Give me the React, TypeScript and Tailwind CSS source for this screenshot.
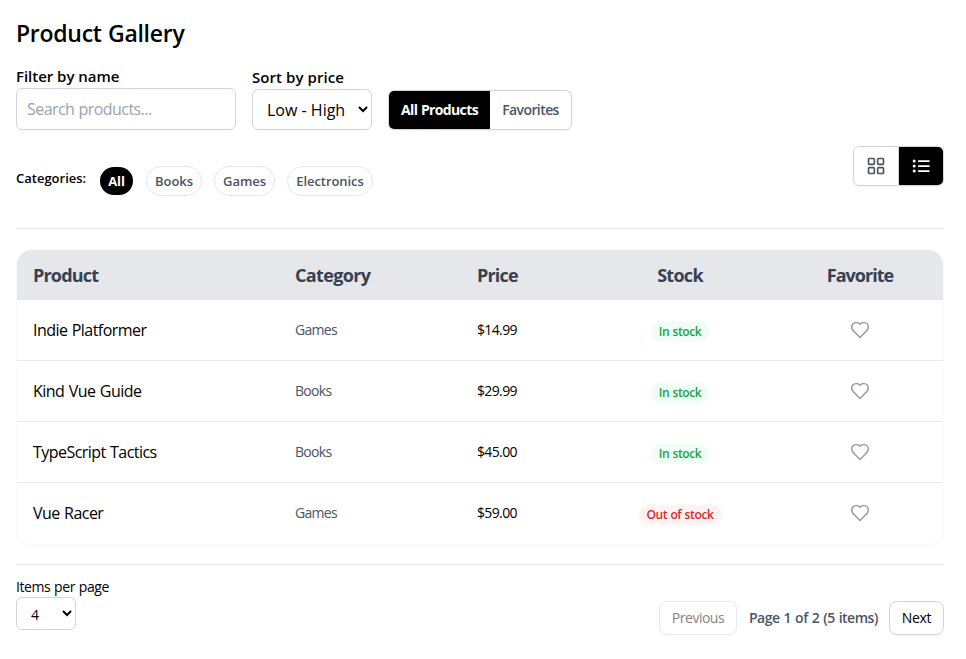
import React, { useState } from "react";

type Product = { name: string; category: string; price: string; inStock: boolean };

const products: Product[] = [
  { name: "Indie Platformer", category: "Games", price: "$14.99", inStock: true },
  { name: "Kind Vue Guide", category: "Books", price: "$29.99", inStock: true },
  { name: "TypeScript Tactics", category: "Books", price: "$45.00", inStock: true },
  { name: "Vue Racer", category: "Games", price: "$59.00", inStock: false },
];

const categories = [
  { name: "All", box: "w-[33px] h-7" },
  { name: "Books", box: "w-14 h-[30px]" },
  { name: "Games", box: "w-[61px] h-[30px]" },
  { name: "Electronics", box: "w-[86px] h-[30px]" },
];

function HeartIcon() {
  return (
    <svg className="h-5 w-5 text-[#9ca3af]" viewBox="0 0 24 24" fill="none" stroke="currentColor" strokeWidth="2" strokeLinecap="round" strokeLinejoin="round">
      <path d="M19 14c1.49-1.46 3-3.21 3-5.5A5.5 5.5 0 0 0 16.5 3c-1.76 0-3 .5-4.5 2-1.5-1.5-2.74-2-4.5-2A5.5 5.5 0 0 0 2 8.5c0 2.3 1.5 4.05 3 5.5l7 7Z" />
    </svg>
  );
}

function GridIcon() {
  return (
    <svg className="h-5 w-5" viewBox="0 0 24 24" fill="none" stroke="currentColor" strokeWidth="2">
      <rect x="3" y="3" width="7" height="7" rx="1" />
      <rect x="14" y="3" width="7" height="7" rx="1" />
      <rect x="3" y="14" width="7" height="7" rx="1" />
      <rect x="14" y="14" width="7" height="7" rx="1" />
    </svg>
  );
}

function ListIcon() {
  return (
    <svg className="h-5 w-5" viewBox="0 0 20 20" fill="currentColor">
      <circle cx="3.2" cy="5" r="1.5" />
      <circle cx="3.2" cy="10" r="1.5" />
      <circle cx="3.2" cy="15" r="1.5" />
      <rect x="6.8" y="4.2" width="12" height="1.7" rx="0.8" />
      <rect x="6.8" y="9.2" width="12" height="1.7" rx="0.8" />
      <rect x="6.8" y="14.2" width="12" height="1.7" rx="0.8" />
    </svg>
  );
}

export default function App() {
  const [category, setCategory] = useState("All");

  return (
    <main className="h-[659px] w-[966px] bg-white pt-[17px] pl-4 font-['Open_Sans','Noto_Sans',sans-serif] text-black">
      <div className="w-[928px] whitespace-nowrap">
        <h1 className="h-[33px] text-[23px] leading-8 font-semibold tracking-[-0.012em] [word-spacing:0.03em]">Product Gallery</h1>

        <div className="mt-4 flex h-16 items-end gap-4">
          <label className="flex flex-col">
            <span className="h-[22px] text-[15px] leading-5 font-semibold tracking-[-0.002em]">Filter by name</span>
            <input
              placeholder="Search products..."
              className="h-[42px] w-[220px] rounded-md border border-[#d1d5db] px-2.5 text-base tracking-[-0.035em] [word-spacing:0.04em] placeholder:text-[#9ca3af]"
            />
          </label>
          <label className="flex flex-col">
            <span className="h-[22px] text-[15px] leading-5 font-semibold tracking-[0.005em]">Sort by price</span>
            <select className="h-[41px] w-[120px] rounded-md border border-[#d1d5db] bg-white px-2.5 text-base">
              <option>Low - High</option>
              <option>High - Low</option>
            </select>
          </label>
          <div className="flex h-10 w-[184px] overflow-hidden rounded-md border border-[#d1d5db] text-sm shadow-xs">
            <button className="w-[101px] bg-black font-bold tracking-[-0.045em] text-white [word-spacing:0.04em]">All Products</button>
            <button className="flex-1 font-semibold tracking-[-0.042em] text-[#4b5563]">Favorites</button>
          </div>
        </div>

        <div className="mt-4 flex h-[83px] items-start justify-between border-b border-[#e5e7eb]">
          <div className="mt-5 flex h-[30px] items-center text-[13px]">
            <span className="mr-[13px] w-[71px] pb-1 font-semibold">Categories:</span>
            <div className="flex items-center gap-x-3">
              {categories.map((c) => (
                <button
                  key={c.name}
                  onClick={() => setCategory(c.name)}
                  className={`${c.box} ${c.name === "All" ? "mr-px" : ""} rounded-full pt-px tracking-[-0.005em] ${
                    category === c.name ? "bg-black font-bold text-white" : "border border-[#e5e7eb] font-semibold text-[#4b5563]"
                  }`}
                >
                  {c.name}
                </button>
              ))}
            </div>
          </div>
          <div className="flex h-10 w-[91px] overflow-hidden rounded-md border border-[#d1d5db] shadow-xs">
            <button className="flex w-[45px] items-center justify-center border-r border-[#d1d5db] text-[#4b5563]"><GridIcon /></button>
            <button className="flex flex-1 items-center justify-center bg-black text-white"><ListIcon /></button>
          </div>
        </div>

        <div className="mt-5 overflow-hidden rounded-2xl border border-[#f9fafb] shadow-xs">
          <table className="w-full table-fixed border-separate border-spacing-0">
            <colgroup>
              <col className="w-[262px]" />
              <col className="w-[182px]" />
              <col className="w-[122px]" />
              <col className="w-[194px]" />
              <col className="w-[166px]" />
            </colgroup>
            <thead>
              <tr className="h-[50px] bg-[#e5e7eb] text-left text-lg text-[#374151]">
                <th className="px-4 py-0 font-bold tracking-[-0.045em]">Product</th>
                <th className="px-4 py-0 font-bold tracking-[-0.036em]">Category</th>
                <th className="px-4 py-0 font-bold tracking-[-0.045em]">Price</th>
                <th className="px-4 py-0 text-center font-bold tracking-[-0.04em]">Stock</th>
                <th className="px-4 py-0 text-center font-bold tracking-[-0.055em]">Favorite</th>
              </tr>
            </thead>
            <tbody className="[&_td]:border-b [&_td]:border-[#e5e7eb] [&>tr:last-child>td]:border-transparent">
              {products.map((p) => (
                <tr key={p.name} className="h-[61px]">
                  <td className="px-4 py-0 text-base tracking-[-0.034em] [word-spacing:0.05em]">{p.name}</td>
                  <td className="px-4 py-0 text-sm tracking-[-0.05em] text-[#4b5563]">{p.category}</td>
                  <td className="px-4 py-0 text-sm tracking-[-0.045em]">{p.price}</td>
                  <td className="px-4 py-0 text-center">
                    <span
                      className={`inline-flex h-5 items-center justify-center rounded-full text-xs font-semibold tracking-[-0.03em] [word-spacing:0.04em] ${
                        p.inStock ? "w-[58px] bg-[#f0fdf4] text-[#16a34a]" : "w-[83px] bg-[#fef2f2] text-[#dc2626]"
                      }`}
                    >
                      {p.inStock ? "In stock" : "Out of stock"}
                    </span>
                  </td>
                  <td className="px-4 py-0">
                    <button className="mx-auto block"><HeartIcon /></button>
                  </td>
                </tr>
              ))}
            </tbody>
          </table>
        </div>

        <div className="mt-[19px] flex items-start justify-between border-t border-[#e5e7eb] pt-3">
          <label className="flex flex-col text-sm">
            <span className="h-5 leading-5 tracking-[-0.03em] [word-spacing:0.04em]">Items per page</span>
            <select className="h-[33px] w-[60px] rounded-md border border-[#d1d5db] bg-white px-2.5 pt-px text-sm">
              <option>4</option>
              <option>8</option>
            </select>
          </label>
          <div className="mt-6 flex items-center gap-3 text-sm">
            <button disabled className="h-[34px] w-[78px] rounded-lg border border-[#d1d5db] tracking-[-0.035em] opacity-50 shadow-xs">Previous</button>
            <span className="w-32 font-semibold tracking-[-0.035em] text-[#4b5563] [word-spacing:0.06em]">Page 1 of 2 (5 items)</span>
            <button className="h-[34px] w-[55px] rounded-lg border border-[#d1d5db] tracking-[-0.02em] shadow-xs">Next</button>
          </div>
        </div>
      </div>
    </main>
  );
}
